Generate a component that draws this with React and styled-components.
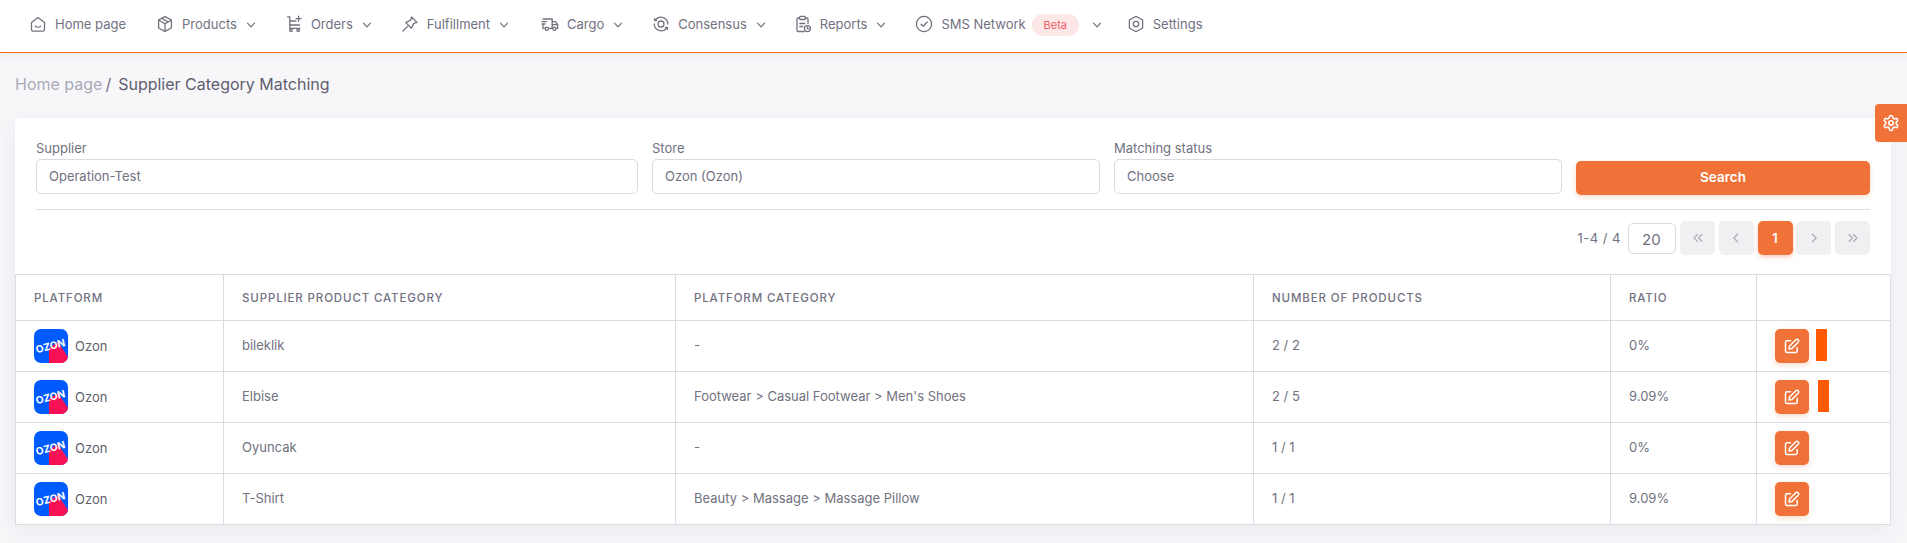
import React from "react";
import styled, { createGlobalStyle } from "styled-components";

const GlobalStyle = createGlobalStyle`
  html, body {
    margin: 0;
    padding: 0;
    background: #f7f7fa;
    font-family: "Inter", "Liberation Sans", sans-serif;
    color: #71717f;
    overflow: hidden;
  }
  * { box-sizing: border-box; }
`;

const Page = styled.div`
  width: 1907px;
  height: 543px;
  position: relative;
  overflow: hidden;
`;

const Header = styled.header`
  display: flex;
  align-items: center;
  height: 53px;
  padding: 0 0 5px 29px;
  background: #fff;
  border-bottom: 1px solid #f5651f;
  box-shadow: 0 3px 8px rgba(60, 60, 90, 0.05);
`;

const NavItem = styled.div`
  display: flex;
  align-items: center;
  height: 24px;
  margin-right: ${(props) => props.$gap}px;
  font-size: 13px;
  color: #71717f;
  white-space: nowrap;
`;

const NavIcon = styled.svg`
  width: 18px;
  height: 18px;
  margin-right: 8px;
  fill: none;
  stroke: #71717f;
  stroke-width: 1.3;
  stroke-linecap: round;
  stroke-linejoin: round;
`;

const Chevron = styled.svg`
  width: 10px;
  height: 10px;
  margin-left: ${(props) => props.$left}px;
  margin-top: 2px;
  fill: none;
  stroke: #71717f;
  stroke-width: 1.2;
  stroke-linecap: round;
  stroke-linejoin: round;
`;

const Badge = styled.span`
  display: inline-flex;
  align-items: center;
  justify-content: center;
  width: 47px;
  height: 22px;
  margin: 2px 0 0 6px;
  border-radius: 11px;
  background: #fde7e7;
  color: #f1606a;
  font-size: 11px;
`;

const Crumbs = styled.div`
  display: flex;
  align-items: center;
  height: 22px;
  margin: 20px 0 0 15px;
  font-size: 16px;
`;

const CrumbLink = styled.span`
  color: #a9a9b6;
`;

const CrumbSep = styled.span`
  margin: 0 7px 0 3px;
  color: #71717f;
`;

const CrumbCurrent = styled.span`
  color: #5e5e6e;
`;

const Card = styled.section`
  width: 1876px;
  margin: 23px 0 0 15px;
  background: #fff;
  box-shadow: 0 6px 22px rgba(60, 60, 100, 0.07);
`;

const Filters = styled.div`
  display: grid;
  grid-template-columns: 602px 448px 448px 294px;
  column-gap: 14px;
  align-items: end;
  margin: 0 21px;
  padding: 21px 0 15px;
  border-bottom: 1px solid #dcdce0;
`;

const Field = styled.div`
  display: flex;
  flex-direction: column;
`;

const Label = styled.label`
  height: 20px;
  font-size: 13px;
  line-height: 18px;
  color: #71717f;
`;

const FakeInput = styled.div`
  display: flex;
  align-items: center;
  height: 35px;
  padding: 0 12px 2px;
  border: 1px solid #dcdce0;
  border-radius: 5px;
  font-size: 13px;
  color: #71717f;
`;

const SearchButton = styled.button`
  height: 34px;
  margin-bottom: -1px;
  padding: 0 0 2px;
  border: 0;
  border-radius: 5px;
  background: #f07238;
  color: #fff;
  font: 600 13.5px "Inter", "Liberation Sans", sans-serif;
  box-shadow: 0 2px 5px rgba(240, 114, 56, 0.25);
`;

const PagerRow = styled.div`
  display: flex;
  justify-content: flex-end;
  align-items: center;
  height: 64px;
  padding: 0 21px 8px 0;
`;

const PagerInfo = styled.span`
  margin-right: 7px;
  font-size: 13px;
  letter-spacing: 0.5px;
  color: #71717f;
`;

const PerPage = styled.div`
  display: flex;
  align-items: center;
  width: 48px;
  height: 31px;
  margin: 1px 4px 0 0;
  padding: 2px 0 0 13px;
  border: 1px solid #dcdce0;
  border-radius: 5px;
  font-size: 15px;
  color: #71717f;
`;

const PageButton = styled.div`
  display: flex;
  align-items: center;
  justify-content: center;
  width: 35px;
  height: 34px;
  margin-left: ${(props) => (props.$first ? 0 : 3.75)}px;
  border-radius: 5px;
  background: ${(props) => (props.$active ? "#f07238" : "#f0f0f3")};
  color: ${(props) => (props.$active ? "#fff" : "#a9a9b6")};
  font-size: 13px;
  font-weight: 600;
  box-shadow: ${(props) => (props.$active ? "0 2px 4px rgba(240, 114, 56, 0.35)" : "none")};
`;

const PageIcon = styled.svg`
  width: 12px;
  height: 12px;
  fill: none;
  stroke: #a9a9b6;
  stroke-width: 1.1;
  stroke-linecap: round;
  stroke-linejoin: round;
`;

const Table = styled.table`
  width: 1876px;
  border-collapse: collapse;
  table-layout: fixed;
  border: 1px solid #dcdce0;
`;

const Th = styled.th`
  height: 46px;
  padding: 0 0 0 18px;
  border: 1px solid #dcdce0;
  text-align: left;
  font-size: 11.5px;
  font-weight: 500;
  letter-spacing: 0.87px;
  color: #71717f;
`;

const Td = styled.td`
  height: 51px;
  padding: 0 0 3px 18px;
  border: 1px solid #dcdce0;
  font-size: 13px;
  color: #71717f;
`;

const PlatformCell = styled.div`
  display: flex;
  align-items: center;
  gap: 7px;
  padding-top: 3px;
  color: #5e5e6e;
`;

const LogoBox = styled.svg`
  display: block;
  flex: none;
  width: 34px;
  height: 34px;
`;

const LogoText = styled.text`
  fill: #fff;
  font-family: "Inter", "Liberation Sans", sans-serif;
  font-size: 10.2px;
  font-weight: 700;
  text-anchor: middle;
`;

const Actions = styled.div`
  display: flex;
  align-items: flex-start;
  padding-top: 3px;
`;

const EditButton = styled.div`
  display: flex;
  align-items: center;
  justify-content: center;
  width: 34px;
  height: 34px;
  border-radius: 5px;
  background: #f07238;
  box-shadow: 0 2px 5px rgba(240, 114, 56, 0.25);
`;

const EditIcon = styled.svg`
  width: 16px;
  height: 16px;
  fill: none;
  stroke: #fff;
  stroke-width: 1.5;
  stroke-linecap: round;
  stroke-linejoin: round;
`;

const ActionBar = styled.div`
  width: 11px;
  height: 32px;
  margin-left: ${(props) => props.$left}px;
  background: #ff5a00;
`;

const SettingsTab = styled.div`
  position: absolute;
  top: 104px;
  right: 0;
  display: flex;
  align-items: center;
  justify-content: center;
  width: 32px;
  height: 38px;
  border-radius: 4px 0 0 4px;
  background: #f07238;
`;

const TabIcon = styled.svg`
  width: 18px;
  height: 18px;
  fill: none;
  stroke: #fff;
  stroke-width: 2.1;
  stroke-linecap: round;
  stroke-linejoin: round;
`;

const icons = {
  home: (
    <>
      <path d="M2.5 7.6 9 2.6l6.5 5v7a1.6 1.6 0 0 1-1.6 1.6H4.1a1.6 1.6 0 0 1-1.6-1.6z" />
      <path d="M6.4 11.2c1.4 1.3 3.8 1.3 5.2 0" />
    </>
  ),
  box: (
    <>
      <path d="M9 1.6 15.4 5v8L9 16.4 2.6 13V5z" />
      <path d="M2.8 5.2 9 8.8l6.2-3.6M9 8.8v7.4M5.8 3.4l6.4 3.6" />
    </>
  ),
  cart: (
    <>
      <path d="M2.5 1.8h2.3v11.6h10M4.8 10h9.7M4.8 6h6.2" />
      <circle cx="6" cy="15.3" r="1.3" />
      <circle cx="13.2" cy="15.3" r="1.3" />
      <path d="M13.6 1.2v5M11.1 3.7h5" />
    </>
  ),
  pin: (
    <>
      <path d="M10.6 2 16 7.4l-3.2 1-2.4 4.8-5.6-5.6L9.6 5.2z" />
      <path d="M6.6 11.4 2 16" />
    </>
  ),
  truck: (
    <>
      <path d="M2 4h9.2v9.4H8M3.6 13.4H2V9.4M1 6.6h4.5M1 9h3" />
      <path d="M11.2 6.6h3.2l2.3 3v3.8h-1.3M11.2 9.6h5.5" />
      <circle cx="5.8" cy="13.8" r="1.6" />
      <circle cx="13.4" cy="13.8" r="1.6" />
    </>
  ),
  target: (
    <>
      <path d="M3.4 5.2A6.8 6.8 0 0 1 15.8 9M14.6 12.8A6.8 6.8 0 0 1 2.2 9" />
      <circle cx="9" cy="9" r="3" />
      <path d="M2.6 3.6v2h2M15.4 14.4v-2h-2" />
    </>
  ),
  clipboard: (
    <>
      <path d="M5.5 3H4a1 1 0 0 0-1 1v11.5a1 1 0 0 0 1 1h6M11.5 3H13a1 1 0 0 1 1 1v4.5" />
      <rect x="5.5" y="1.3" width="6" height="3.2" rx="1.2" />
      <path d="M5.8 8.5h5M5.8 11.5h3" />
      <circle cx="13.4" cy="13.6" r="3" />
      <path d="M13.4 12.1v1.6h1.3" />
    </>
  ),
  check: (
    <>
      <circle cx="9" cy="9" r="7.6" />
      <path d="M6 9.2 8.2 11.3 12.2 7" />
    </>
  ),
  hex: (
    <>
      <path d="M9 1.3 15.6 5v8L9 16.7 2.4 13V5z" />
      <circle cx="9" cy="9" r="2.7" />
    </>
  ),
};

const navItems = [
  { icon: "home", label: "Home page", gap: 30 },
  { icon: "box", label: "Products", chevron: true, gap: 29 },
  { icon: "cart", label: "Orders", chevron: true, gap: 29 },
  { icon: "pin", label: "Fulfillment", chevron: true, gap: 32 },
  { icon: "truck", label: "Cargo", chevron: true, gap: 29 },
  { icon: "target", label: "Consensus", chevron: true, gap: 28 },
  { icon: "clipboard", label: "Reports", chevron: true, gap: 29 },
  { icon: "check", label: "SMS Network", badge: "Beta", chevron: true, gap: 25 },
  { icon: "hex", label: "Settings", gap: 0 },
];

const rows = [
  { name: "bileklik", category: "-", count: "2 / 2", ratio: "0%", barLeft: 7 },
  { name: "Elbise", category: "Footwear > Casual Footwear > Men's Shoes", count: "2 / 5", ratio: "9.09%", barLeft: 8.5 },
  { name: "Oyuncak", category: "-", count: "1 / 1", ratio: "0%" },
  { name: "T-Shirt", category: "Beauty > Massage > Massage Pillow", count: "1 / 1", ratio: "9.09%" },
];

const ChevronDown = ({ left }) => (
  <Chevron viewBox="0 0 10 10" $left={left}>
    <path d="M1.5 3.2 5 6.8l3.5-3.6" />
  </Chevron>
);

// Ozon app icon: blue tile, pink wedge and tilted wordmark
const OzonLogo = ({ id }) => (
  <LogoBox viewBox="0 0 34 34">
    <defs>
      <clipPath id={id}>
        <rect width="34" height="34" rx="7" />
      </clipPath>
    </defs>
    <g clipPath={`url(#${id})`}>
      <rect width="34" height="34" fill="#005bff" />
      <path d="M15 34V19L24 13l10 15v6z" fill="#f91155" />
      <LogoText x="16.5" y="20.5" transform="rotate(-14 17 17)">OZON</LogoText>
    </g>
  </LogoBox>
);

export default function App() {
  return (
    <Page>
      <GlobalStyle />
      <Header>
        {navItems.map((item) => (
          <NavItem key={item.label} $gap={item.gap}>
            <NavIcon viewBox="0 0 18 18">{icons[item.icon]}</NavIcon>
            {item.label}
            {item.badge && <Badge>{item.badge}</Badge>}
            {item.chevron && <ChevronDown left={item.badge ? 13 : 9} />}
          </NavItem>
        ))}
      </Header>

      <Crumbs>
        <CrumbLink>Home page</CrumbLink>
        <CrumbSep>/</CrumbSep>
        <CrumbCurrent>Supplier Category Matching</CrumbCurrent>
      </Crumbs>

      <Card>
        <Filters>
          <Field>
            <Label>Supplier</Label>
            <FakeInput>Operation-Test</FakeInput>
          </Field>
          <Field>
            <Label>Store</Label>
            <FakeInput>Ozon (Ozon)</FakeInput>
          </Field>
          <Field>
            <Label>Matching status</Label>
            <FakeInput>Choose</FakeInput>
          </Field>
          <SearchButton type="button">Search</SearchButton>
        </Filters>

        <PagerRow>
          <PagerInfo>1-4 / 4</PagerInfo>
          <PerPage>20</PerPage>
          <PageButton $first>
            <PageIcon viewBox="0 0 12 12"><path d="M5.5 2.5 2 6l3.5 3.5M10 2.5 6.5 6l3.5 3.5" /></PageIcon>
          </PageButton>
          <PageButton>
            <PageIcon viewBox="0 0 12 12"><path d="M7.8 2 3.8 6l4 4" /></PageIcon>
          </PageButton>
          <PageButton $active>1</PageButton>
          <PageButton>
            <PageIcon viewBox="0 0 12 12"><path d="M4.2 2l4 4-4 4" /></PageIcon>
          </PageButton>
          <PageButton>
            <PageIcon viewBox="0 0 12 12"><path d="M2 2.5 5.5 6 2 9.5M6.5 2.5 10 6l-3.5 3.5" /></PageIcon>
          </PageButton>
        </PagerRow>

        <Table>
          <colgroup>
            <col style={{ width: 208 }} />
            <col style={{ width: 452 }} />
            <col style={{ width: 578 }} />
            <col style={{ width: 357 }} />
            <col style={{ width: 146 }} />
            <col />
          </colgroup>
          <thead>
            <tr>
              <Th>PLATFORM</Th>
              <Th>SUPPLIER PRODUCT CATEGORY</Th>
              <Th>PLATFORM CATEGORY</Th>
              <Th>NUMBER OF PRODUCTS</Th>
              <Th>RATIO</Th>
              <Th />
            </tr>
          </thead>
          <tbody>
            {rows.map((row, i) => (
              <tr key={row.name}>
                <Td>
                  <PlatformCell>
                    <OzonLogo id={`ozon-${i}`} />
                    Ozon
                  </PlatformCell>
                </Td>
                <Td>{row.name}</Td>
                <Td>{row.category}</Td>
                <Td>{row.count}</Td>
                <Td>{row.ratio}</Td>
                <Td>
                  <Actions>
                    <EditButton>
                      <EditIcon viewBox="0 0 16 16">
                        <path d="M6.5 2.8H3a1.5 1.5 0 0 0-1.5 1.5V13A1.5 1.5 0 0 0 3 14.500h8.700a1.500 1.500 0 0 0 1.500-1.500V9.500" />
                        <path d="M11.8 1.8a1.700 1.700 0 0 1 2.400 2.400L8 10.400l-3 .6.600-3z" />
                      </EditIcon>
                    </EditButton>
                    {row.barLeft && <ActionBar $left={row.barLeft} />}
                  </Actions>
                </Td>
              </tr>
            ))}
          </tbody>
        </Table>
      </Card>

      <SettingsTab>
        <TabIcon viewBox="0 0 24 24">
          <circle cx="12" cy="12" r="3" />
          <path d="M12.2 2h-.4a2 2 0 0 0-2 2v.2a2 2 0 0 1-1 1.700l-.4.300a2 2 0 0 1-2 0l-.2-.1a2 2 0 0 0-2.700.7l-.2.4a2 2 0 0 0 .7 2.700l.2.1a2 2 0 0 1 1 1.700v.5a2 2 0 0 1-1 1.700l-.2.1a2 2 0 0 0-.7 2.700l.2.4a2 2 0 0 0 2.700.7l.2-.1a2 2 0 0 1 2 0l.4.3a2 2 0 0 1 1 1.700v.2a2 2 0 0 0 2 2h.4a2 2 0 0 0 2-2v-.2a2 2 0 0 1 1-1.700l.4-.3a2 2 0 0 1 2 0l.2.1a2 2 0 0 0 2.700-.7l.2-.4a2 2 0 0 0-.7-2.700l-.2-.1a2 2 0 0 1-1-1.700v-.5a2 2 0 0 1 1-1.700l.2-.1a2 2 0 0 0 .7-2.700l-.2-.4a2 2 0 0 0-2.700-.7l-.2.1a2 2 0 0 1-2 0l-.4-.3a2 2 0 0 1-1-1.700V4a2 2 0 0 0-2-2z" />
        </TabIcon>
      </SettingsTab>
    </Page>
  );
}
